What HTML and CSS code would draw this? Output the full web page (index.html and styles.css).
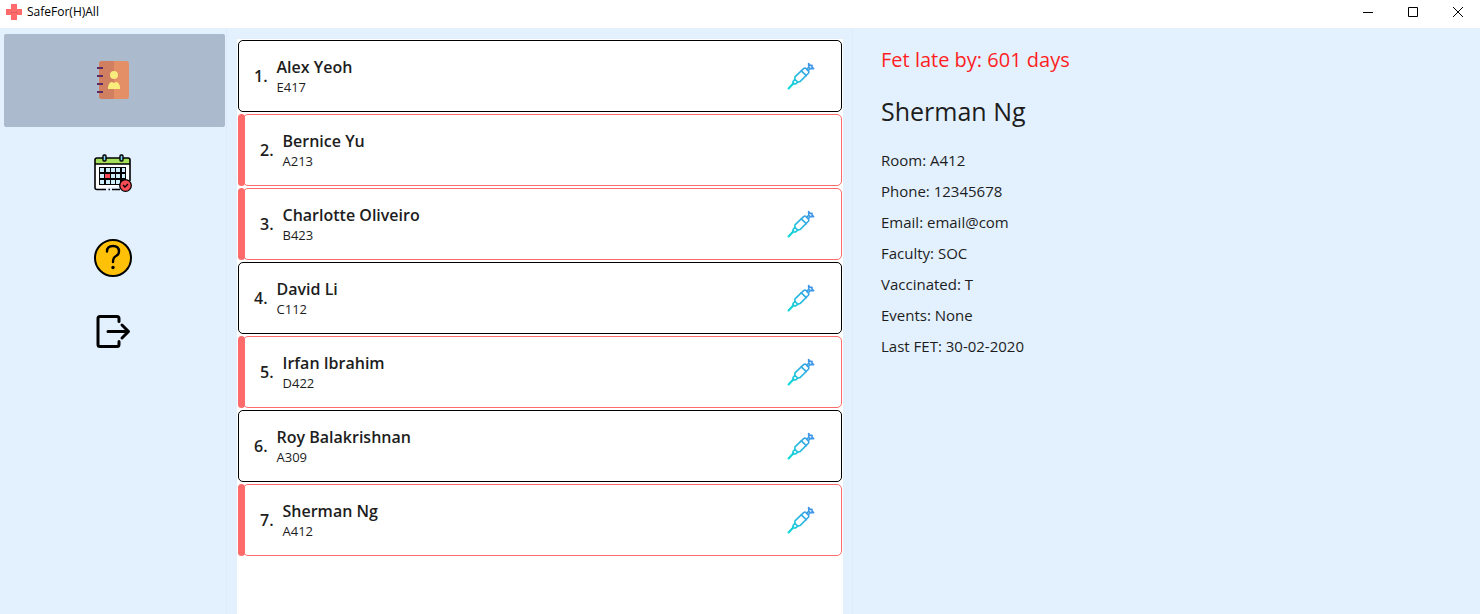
FILE: index.html
```
<!DOCTYPE html>
<html lang="en">
<head>
<meta charset="utf-8">
<title>SafeFor(H)All</title>
<link rel="stylesheet" href="styles.css">
</head>
<body>
<svg width="0" height="0" class="defs" aria-hidden="true">
  <defs>
    <linearGradient id="syringe-ink" gradientUnits="userSpaceOnUse" x1="0" y1="28" x2="28" y2="0">
      <stop offset="0.1" stop-color="#12d8d6"/>
      <stop offset="0.9" stop-color="#4292ea"/>
    </linearGradient>
    <symbol id="syringe" viewBox="0 0 28 28">
      <g fill="none" stroke="url(#syringe-ink)" stroke-width="1.6" stroke-linejoin="round" stroke-linecap="round">
        <path d="M1.600 26.400L6.500 21.200" stroke-width="2.200"/>
        <path d="M6 19.500L7.800 17.400L10.800 20.200L8.500 22L5.800 22Z"/>
        <path d="M7.800 17.400L8 14.800L16.600 6.600Q18 5.600 19.200 6.700L21.400 8.900Q22.400 10 21.400 11.200L13 19.600L10.800 20.200"/>
        <path d="M14.300 8.800L19.300 13.600"/>
        <path d="M19.800 7.400L21.400 5.600M21.200 8.600L23 7M21.600 1.600L21.800 5.200L23.200 6.600L26.600 6.600M21.600 1.600L23.400 3.500L25 3.400L24.900 4.900L26.600 6.600"/>
      </g>
    </symbol>
  </defs>
</svg>

<header class="titlebar">
  <svg class="logo" viewBox="0 0 16 16" aria-hidden="true">
    <path d="M5 0h6v5h5v6h-5v5H5v-5H0V5h5z" fill="#ff6b6b"/>
    <path d="M5 8.500h1.500M7.500 8.500h1M9.500 8.500H11" stroke="#c25a60" fill="none"/>
  </svg>
  <h1 class="app-name">SafeFor(H)All</h1>
  <div class="window-controls">
    <button type="button" aria-label="Minimize"><svg viewBox="0 0 12 12"><path d="M1 6.500h10"/></svg></button>
    <button type="button" aria-label="Maximize"><svg viewBox="0 0 12 12"><path d="M1.500 1.500h9v9h-9z"/></svg></button>
    <button type="button" aria-label="Close"><svg viewBox="0 0 12 12"><path d="M1 1l10 10M11 1L1 11"/></svg></button>
  </div>
</header>

<main class="workspace">
  <nav class="sidebar">
    <button type="button" class="nav-item selected" aria-label="Residents">
      <svg width="38" height="38" viewBox="0 0 38 38">
        <rect x="5" y="0" width="30" height="38" rx="3" fill="#e58f66"/>
        <path d="M8 0h12v38H8a3 3 0 0 1-3-3V3a3 3 0 0 1 3-3z" fill="#d07f60"/>
        <path d="M3 7h6M3 15h6M3 23h6M3 31h6" stroke="#5a2a63" stroke-width="2"/>
        <circle cx="20" cy="14" r="4" fill="#f8ec7d"/>
        <path d="M14 28v-2q1-5 4-5l2 1 2-1q3 0 4 5v2z" fill="#f8ec7d"/>
      </svg>
    </button>
    <button type="button" class="nav-item" aria-label="Events">
      <svg width="38" height="38" viewBox="0 0 38 38">
        <path d="M1 35V6q0-2 2-2h31q2 0 2 2v25" fill="#fff"/>
        <path d="M1 10V6q0-2 2-2h31q2 0 2 2v4z" fill="#a4e05a"/>
        <path d="M12 35.500H3q-2 0-2-2V6q0-2 2-2h31q2 0 2 2v21M1 10h35M14.500 35.500h1.500M18 35.500h8" fill="none" stroke="#000" stroke-width="1.600"/>
        <path d="M5 13h27v18H5z" fill="#000"/>
        <path d="M6 14h4v4H6zM12 14h4v4h-4zM17 14h4v4h-4zM22 14h4v4h-4zM28 14h3v4h-3zM6 20h4v4H6zM17 20h4v4h-4zM22 20h4v4h-4zM28 20h3v4h-3zM6 26h4v4H6zM12 26h4v4h-4zM17 26h4v4h-4zM22 26h4v4h-4z" fill="#cbeefa"/>
        <path d="M11 20h5v4h-5z" fill="#fb4b55"/>
        <rect x="9" y="1" width="3" height="6" rx="1" fill="#84d6f5" stroke="#000" stroke-width="1.400"/>
        <rect x="26" y="1" width="3" height="6" rx="1" fill="#84d6f5" stroke="#000" stroke-width="1.400"/>
        <circle cx="31.500" cy="31.500" r="5.800" fill="#fb4b55" stroke="#000" stroke-width="1.300"/>
        <path d="M29 31l2 2 3-3" fill="none" stroke="#000" stroke-width="1.300"/>
      </svg>
    </button>
    <button type="button" class="nav-item compact" aria-label="Help">
      <svg width="38" height="38" viewBox="0 0 38 38">
        <circle cx="19" cy="19" r="18" fill="#ffc107" stroke="#000" stroke-width="2"/>
        <path d="M13 12.500Q13 7 19 7Q25 7 25 12.500Q25 15.500 22 17Q19 18.500 19 23" fill="none" stroke="#000" stroke-width="2.400" stroke-linecap="round"/>
        <circle cx="19" cy="28.500" r="1.700"/>
      </svg>
    </button>
    <button type="button" class="nav-item compact" aria-label="Exit">
      <svg width="38" height="33" viewBox="0 0 38 33">
        <path d="M25 6.500V3.500Q25 1.500 23 1.500H6Q4 1.500 4 3.500V29.500Q4 31.500 6 31.500H23Q25 31.500 25 29.500V26.500M14 16.500H34M28 10L34.500 16.500L28 23" fill="none" stroke="#000" stroke-width="3" stroke-linecap="round" stroke-linejoin="round"/>
      </svg>
    </button>
  </nav>

  <section class="list-pane" aria-label="Residents">
    <ol class="resident-list">
      <li class="card"><span class="index">1.</span><div class="who"><h2>Alex Yeoh</h2><p>E417</p></div><svg class="vaccinated" role="img" aria-label="Vaccinated"><use href="#syringe"/></svg></li>
      <li class="card late"><span class="index">2.</span><div class="who"><h2>Bernice Yu</h2><p>A213</p></div></li>
      <li class="card late"><span class="index">3.</span><div class="who"><h2>Charlotte Oliveiro</h2><p>B423</p></div><svg class="vaccinated" role="img" aria-label="Vaccinated"><use href="#syringe"/></svg></li>
      <li class="card"><span class="index">4.</span><div class="who"><h2>David Li</h2><p>C112</p></div><svg class="vaccinated" role="img" aria-label="Vaccinated"><use href="#syringe"/></svg></li>
      <li class="card late"><span class="index">5.</span><div class="who"><h2>Irfan Ibrahim</h2><p>D422</p></div><svg class="vaccinated" role="img" aria-label="Vaccinated"><use href="#syringe"/></svg></li>
      <li class="card"><span class="index">6.</span><div class="who"><h2>Roy Balakrishnan</h2><p>A309</p></div><svg class="vaccinated" role="img" aria-label="Vaccinated"><use href="#syringe"/></svg></li>
      <li class="card late"><span class="index">7.</span><div class="who"><h2>Sherman Ng</h2><p>A412</p></div><svg class="vaccinated" role="img" aria-label="Vaccinated"><use href="#syringe"/></svg></li>
    </ol>
  </section>

  <section class="details">
    <p class="overdue">Fet late by: 601 days</p>
    <h2 class="resident-name">Sherman Ng</h2>
    <p>Room: A412</p>
    <p>Phone: 12345678</p>
    <p>Email: email@com</p>
    <p>Faculty: SOC</p>
    <p>Vaccinated: T</p>
    <p>Events: None</p>
    <p>Last FET: 30-02-2020</p>
  </section>
</main>
</body>
</html>
```
FILE: styles.css
```
* {
  box-sizing: border-box;
}

body {
  margin: 0;
  min-height: 100vh;
  display: flex;
  flex-direction: column;
  background: #e3f1ff;
  color: #1d1d1d;
  font-family: "Open Sans", "Noto Sans", sans-serif;
}

h1, h2, p, ol {
  margin: 0;
  padding: 0;
}

button {
  border: 0;
  padding: 0;
  background: none;
  cursor: pointer;
}

svg {
  display: block;
}

.defs {
  position: absolute;
}

.titlebar {
  display: flex;
  align-items: center;
  gap: 5px;
  height: 28px;
  padding: 0 0 4px 6px;
  background: #fff;
}

.logo {
  width: 16px;
  height: 16px;
}

.app-name {
  font-size: 12px;
  font-weight: 400;
  line-height: 16px;
  color: #000;
}

.window-controls {
  display: flex;
  margin-left: auto;
}

.window-controls button {
  display: grid;
  place-items: center;
  width: 45px;
  height: 24px;
}

.window-controls svg {
  width: 12px;
  height: 12px;
  fill: none;
  stroke: #000;
}

.workspace {
  flex: 1;
  display: grid;
  grid-template-columns: 226fr 627fr 627fr;
}

.sidebar {
  display: flex;
  flex-direction: column;
  padding: 6px 1px 0 4px;
}

.nav-item {
  display: grid;
  justify-items: center;
  padding: 27px 4px 28px 0;
  border-radius: 2px;
}

.nav-item.compact {
  padding-top: 19px;
  padding-bottom: 19px;
}

.nav-item.selected {
  background: #abbacc;
}

.list-pane {
  display: flex;
  border: solid #dcecfc;
  border-width: 0 1px;
  padding: 11px 9px 0 10px;
}

.resident-list {
  flex: 1;
  display: flex;
  flex-direction: column;
  gap: 2px;
  padding: 1px;
  background: #fff;
  list-style: none;
}

.card {
  position: relative;
  display: flex;
  align-items: center;
  gap: 9px;
  height: 72px;
  padding: 0 26px 0 15px;
  border: 1px solid #000;
  border-radius: 5px;
}

.card.late {
  margin-left: 5px;
  padding-left: 16px;
  border-color: #ff6b6b;
}

.card.late::before {
  content: "";
  position: absolute;
  top: -1px;
  bottom: -1px;
  left: -6px;
  width: 7px;
  border-radius: 4px;
  background: #ff6b6b;
}

.index,
.who h2 {
  font-size: 16px;
  font-weight: 600;
  line-height: 22px;
}

.who p {
  font-size: 13px;
  line-height: 18px;
}

.vaccinated {
  width: 28px;
  height: 28px;
  margin-left: auto;
}

.details {
  padding: 18px 28px;
  font-size: 15px;
  line-height: 31px;
}

.overdue {
  font-size: 20px;
  line-height: 28px;
  color: #ff1e1e;
}

.resident-name {
  margin: 19px 0 16px;
  font-size: 25px;
  font-weight: 400;
  line-height: 36px;
}
```
